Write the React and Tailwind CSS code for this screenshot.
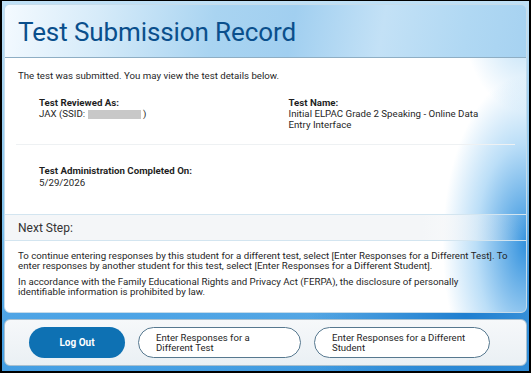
export default function App() {
  return (
    <div className="w-[531px] h-[373px] bg-black pt-px px-[2px] pb-[2px] font-['Roboto',_'Liberation_Sans',_sans-serif]">
      <div className="w-full h-full px-[2px] pt-[3px] pb-[5px] flex flex-col gap-[6px] bg-[radial-gradient(ellipse_30%_40%_at_88%_85%,#1f7fd0,transparent),radial-gradient(ellipse_50%_30%_at_20%_90%,#4aa3e6,transparent),linear-gradient(180deg,#bfe0f6_0%,#7fc0ec_60%,#3d98de_100%)]">
        {/* Main card */}
        <div className="h-[309px] rounded-[6px] border border-[#c7dcea] overflow-hidden flex flex-col bg-[radial-gradient(ellipse_16%_55%_at_100%_78%,rgba(40,140,220,0.95),rgba(120,190,240,0.5)_60%,transparent),radial-gradient(ellipse_45%_14%_at_42%_0%,rgba(150,205,240,0.75),transparent),radial-gradient(ellipse_12%_30%_at_100%_5%,rgba(130,195,240,0.6),transparent),linear-gradient(#ffffff,#ffffff)]">
          <div className="h-[53px] shrink-0 border-b border-[#8eaec4] flex items-center pl-[13px] bg-[linear-gradient(100deg,#f4faff_0%,#d6ebf9_18%,#a9d4f1_40%,#a1cff0_55%,#c3e1f6_72%,#b0d8f3_88%,#a6d2f1_100%)]">
            <h1 className="text-[26px] leading-none text-[#0a4f8c] pt-[2px] tracking-[-0.1px]">
              Test Submission Record
            </h1>
          </div>
          <div className="flex-1 flex flex-col text-[9.7px] text-[#1f1f1f]">
            <p className="px-[13px] pt-[12px] leading-[12px]">
              The test was submitted. You may view the test details below.
            </p>
            <div className="mx-[11px] mt-[15px] grid grid-cols-2 border-b border-[#eef1f3] pb-[14px] leading-[10.5px]">
              <div className="pl-[23px]">
                <div className="font-bold leading-[12px]">Test Reviewed As:</div>
                <div className="flex items-center">
                  JAX (SSID:&nbsp;
                  <span className="inline-block w-[53px] h-[9px] bg-[#c8c8c8]"></span>&nbsp;)
                </div>
              </div>
              <div className="pl-[23px]">
                <div className="font-bold leading-[12px]">Test Name:</div>
                <div>Initial ELPAC Grade 2 Speaking - Online Data<br />Entry Interface</div>
              </div>
            </div>
            <div className="pl-[34px] pt-[20px] leading-[12px]">
              <div className="font-bold">Test Administration Completed On:</div>
              <div>5/29/2026</div>
            </div>
            <div className="mt-[25px] h-[27px] border-y border-[#d3e5f0] bg-[linear-gradient(90deg,rgba(244,246,248,1)_80%,rgba(244,246,248,0)_100%)] flex items-center pl-[13px] text-[12px] text-[#333]">
              Next Step:
            </div>
            <div className="px-[13px] pt-[10px] leading-[10px] flex flex-col gap-[6px]">
              <p>
                To continue entering responses by this student for a different test, select [Enter Responses for a Different Test]. To enter responses by another student for this test, select [Enter Responses for a Different Student].
              </p>
              <p className="pr-[40px]">
                In accordance with the Family Educational Rights and Privacy Act (FERPA), the disclosure of personally identifiable information is prohibited by law.
              </p>
            </div>
          </div>
        </div>
        {/* Footer */}
        <div className="h-[47px] rounded-[6px] border border-[#a9c0cf] bg-[linear-gradient(180deg,#f6f8fa,#eaf0f4)] flex items-center gap-[13px] pl-[24px]">
          <button className="w-[96px] h-[31px] rounded-full bg-[#0e71b3] text-white font-bold text-[10px]">
            Log Out
          </button>
          <button className="w-[163px] h-[31px] rounded-full border border-[#56788f] bg-white text-left pl-[17px] text-[9.6px] leading-[10px] text-[#1f1f1f]">
            Enter Responses for a<br />Different Test
          </button>
          <button className="w-[176px] h-[31px] rounded-full border border-[#56788f] bg-white text-left pl-[17px] text-[9.6px] leading-[10px] text-[#1f1f1f]">
            Enter Responses for a Different<br />Student
          </button>
        </div>
      </div>
    </div>
  );
}
